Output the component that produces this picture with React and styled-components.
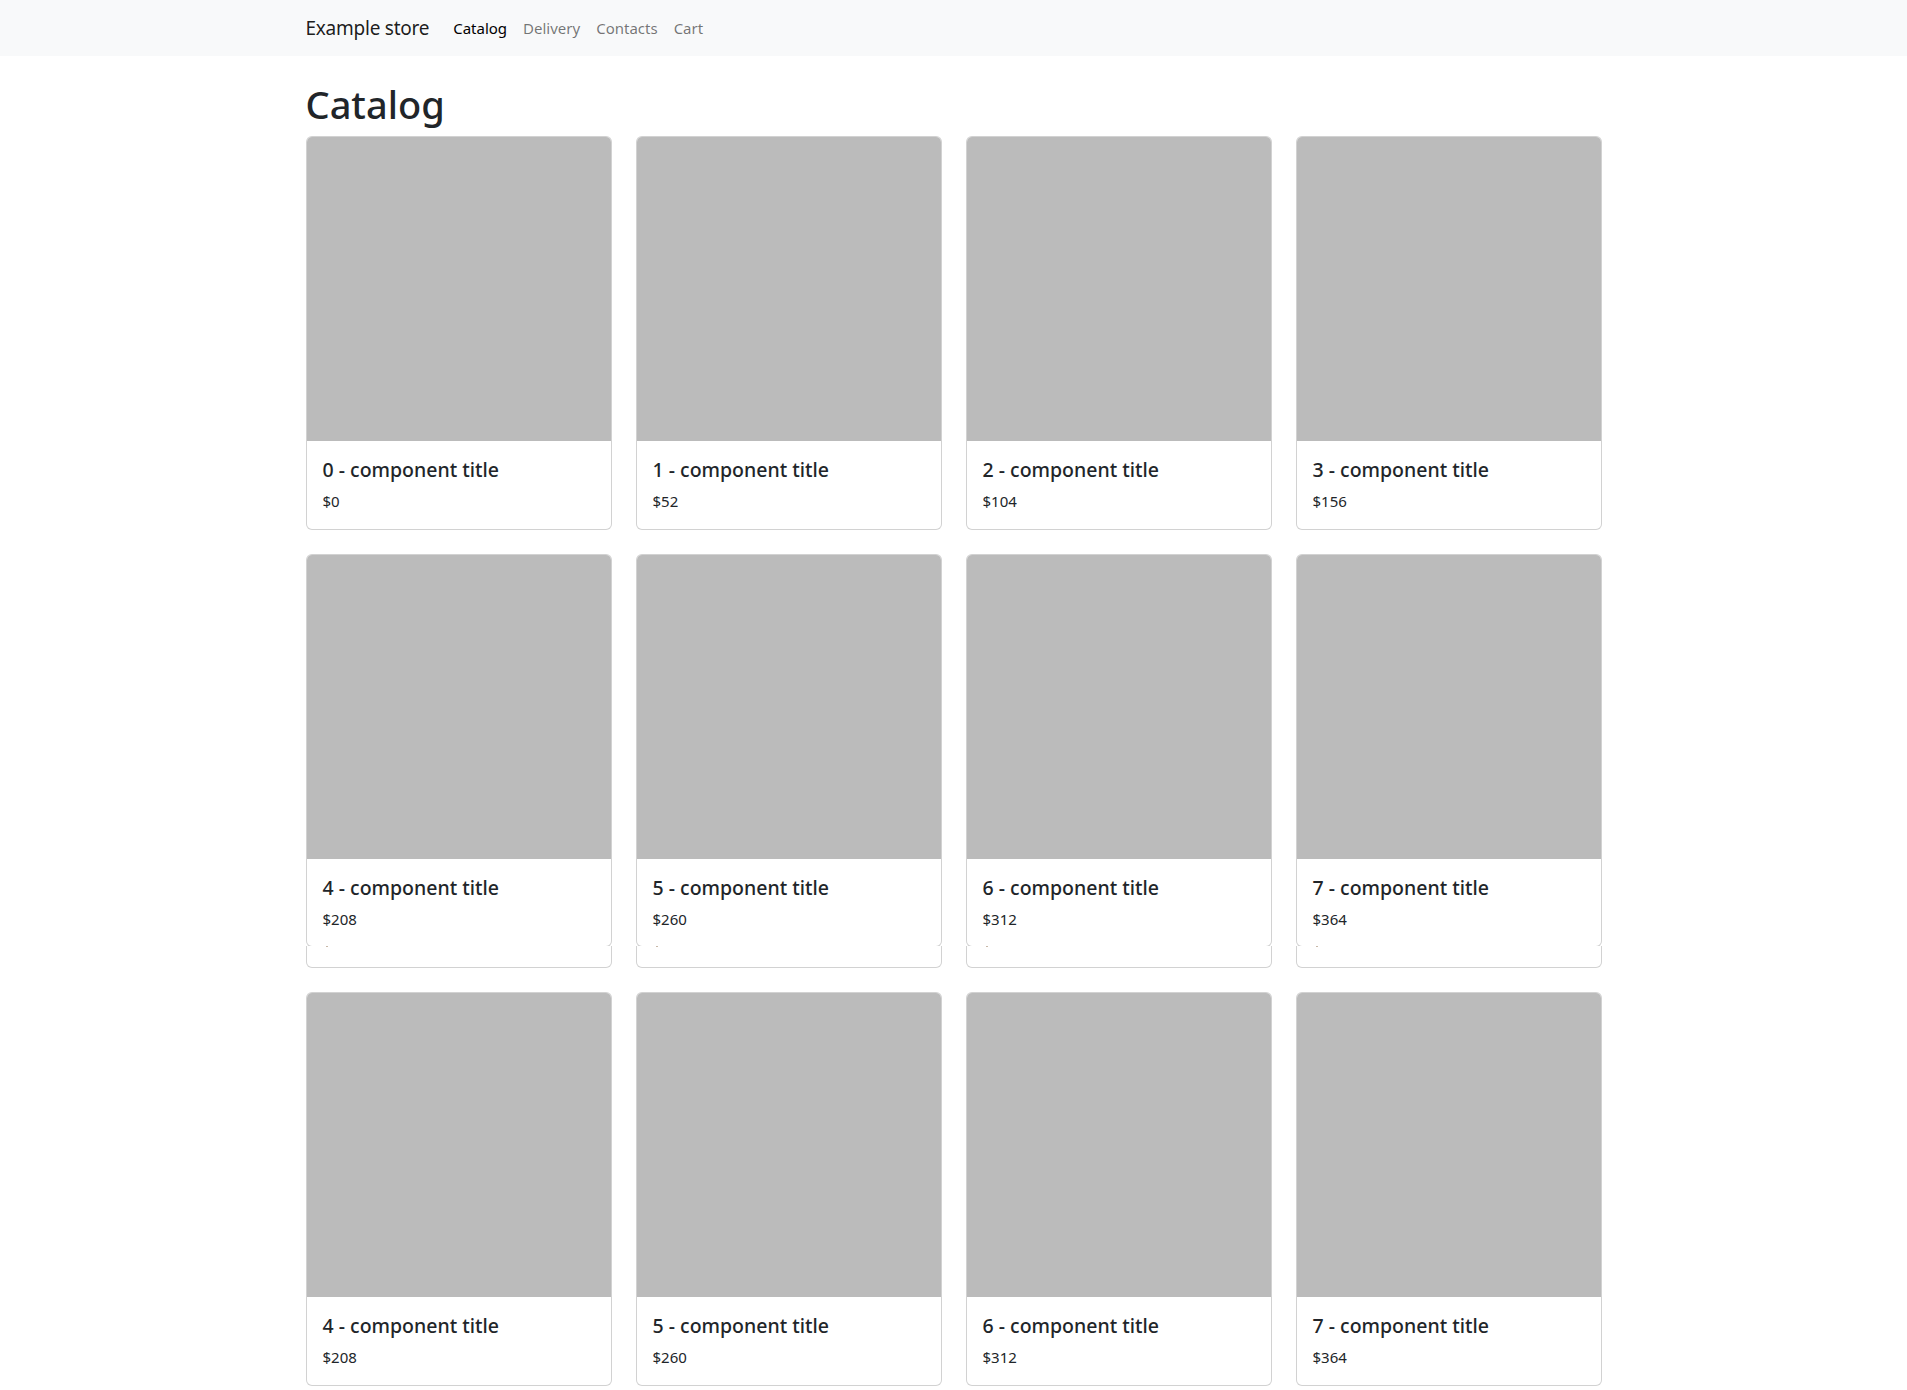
import styled, { createGlobalStyle } from "styled-components";

const GlobalStyle = createGlobalStyle`
  *, *::before, *::after { box-sizing: border-box; }
  body {
    margin: 0;
    font-family: "Segoe UI", "Noto Sans", "Open Sans", sans-serif;
    font-size: 16px;
    line-height: 1.5;
    color: #212529;
    background: #fff;
  }
`;

const Navbar = styled.nav`
  background-color: #f8f9fa;
  padding: 8px 0;
`;

const Container = styled.div`
  max-width: 1320px;
  margin: 0 auto;
  padding: 0 12px;
  display: ${(props) => (props.$flex ? "flex" : "block")};
  align-items: center;
`;

const Brand = styled.a`
  font-size: 19px;
  letter-spacing: -0.25px;
  padding: 5px 0;
  margin-right: 16px;
  color: rgba(0, 0, 0, 0.9);
  text-decoration: none;
  line-height: 30px;
`;

const NavList = styled.ul`
  display: flex;
  list-style: none;
  margin: 0;
  padding: 0;
`;

const NavLink = styled.a`
  display: block;
  padding: 8px;
  color: ${(props) => (props.$active ? "rgba(0, 0, 0, 1)" : "rgba(0, 0, 0, 0.55)")};
  text-decoration: none;
  font-size: 15px;
  line-height: 24px;
`;

const Title = styled.h1`
  font-size: 38px;
  font-weight: 500;
  line-height: 48px;
  margin: 24px 0 8px;
`;

const Grid = styled.div`
  display: grid;
  grid-template-columns: repeat(4, 1fr);
  gap: 24px;
  padding-bottom: 24px;
`;

const Item = styled.div`
  display: flex;
  flex-direction: column;
`;

const Card = styled.div`
  background: #fff;
  border: 1px solid rgba(0, 0, 0, 0.175);
  border-radius: 6px;
  overflow: hidden;
`;

const Thumb = styled.div`
  aspect-ratio: 1 / 1;
  background: #bbbbbb;
`;

const CardBody = styled.div`
  padding: 17px 16px 16px;
`;

const CardTitle = styled.h5`
  margin: 0 0 8px;
  font-size: 19.5px;
  font-weight: 500;
  line-height: 24px;
`;

const Price = styled.p`
  margin: 0;
  font-size: 15px;
  line-height: 22.5px;
`;

const Tail = styled.div`
  position: relative;
  margin-top: -1px;
  height: 22px;
  background: #fff;
  border: 1px solid rgba(0, 0, 0, 0.175);
  border-top: none;
  border-radius: 0 0 6px 6px;
  padding-left: 19px;
`;

const Dot = styled.span`
  display: block;
  width: 2px;
  height: 1px;
  background: #c8b8a8;
`;

const rows = [
  [0, 1, 2, 3],
  [4, 5, 6, 7],
  [4, 5, 6, 7],
];

function ProductCard({ n, tail }) {
  return (
    <Item>
      <Card>
        <Thumb />
        <CardBody>
          <CardTitle>{n} - component title</CardTitle>
          <Price>${n * 52}</Price>
        </CardBody>
      </Card>
      {tail && (
        <Tail>
          <Dot />
        </Tail>
      )}
    </Item>
  );
}

export default function App() {
  return (
    <>
      <GlobalStyle />
      <Navbar>
        <Container $flex>
          <Brand href="#">Example store</Brand>
          <NavList>
            <li><NavLink $active href="#">Catalog</NavLink></li>
            <li><NavLink href="#">Delivery</NavLink></li>
            <li><NavLink href="#">Contacts</NavLink></li>
            <li><NavLink href="#">Cart</NavLink></li>
          </NavList>
        </Container>
      </Navbar>
      <Container>
        <Title>Catalog</Title>
        <Grid>
          {rows.map((row, r) =>
            row.map((n) => <ProductCard key={`${r}-${n}`} n={n} tail={r === 1} />)
          )}
        </Grid>
      </Container>
    </>
  );
}
